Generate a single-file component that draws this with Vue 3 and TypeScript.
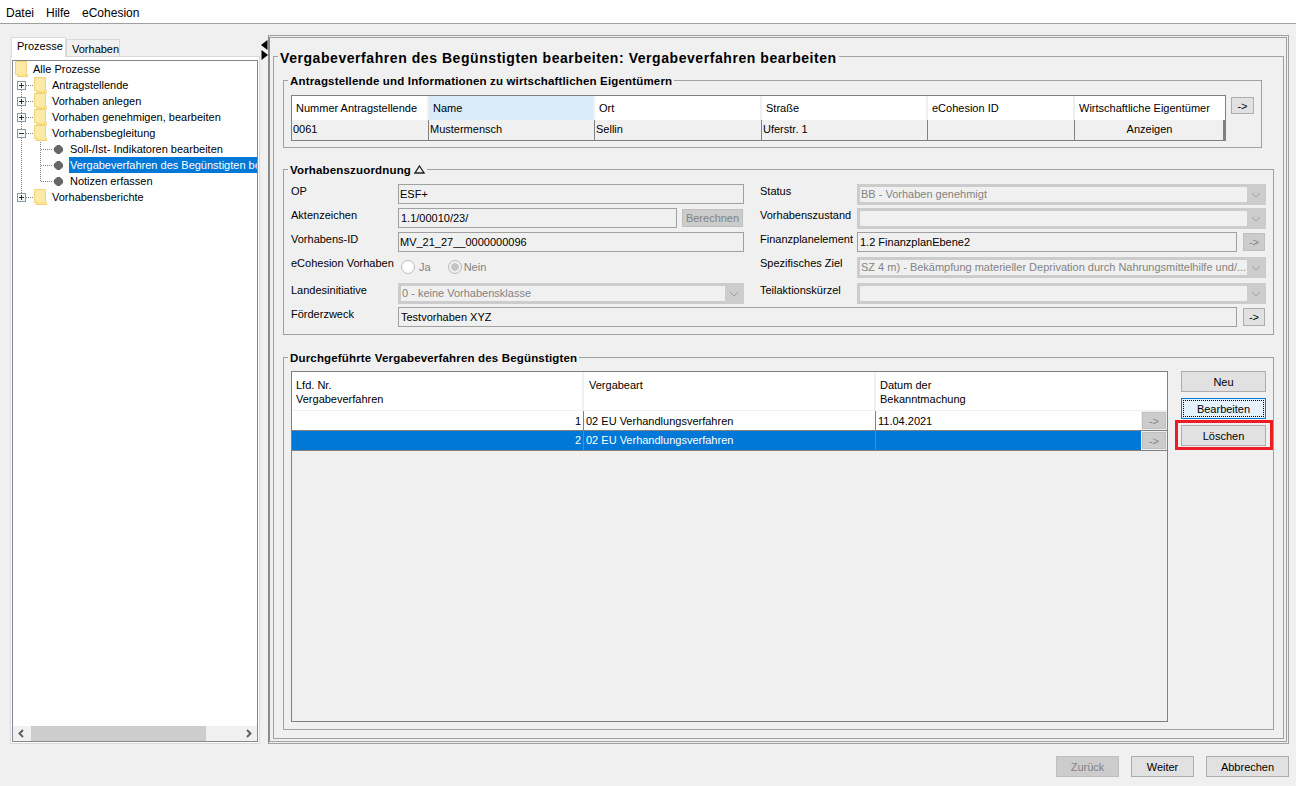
<template>
  <div class="app">
    <nav class="menubar">
      <span v-for="m in menus" :key="m">{{ m }}</span>
    </nav>

    <div class="workspace">
      <aside class="side">
        <div class="tabs">
          <div class="tab active">Prozesse</div>
          <div class="tab">Vorhaben</div>
        </div>
        <div class="tab-body">
          <div class="tree-box">
            <div class="tree">
              <svg class="tree-lines" width="60" height="150" aria-hidden="true">
                <path d="M8.5 29V132M27.500 79V121" stroke="#808080" stroke-dasharray="1 1" fill="none" />
                <path d="M13 24.500H20M13 40.500H20M13 56.500H20M13 72.500H20M13 136.500H20M28 88.500H40M28 104.500H40M28 120.500H40" stroke="#808080" stroke-dasharray="1 1" fill="none" />
              </svg>
              <div
                v-for="node in nodes"
                :key="node.label"
                class="node"
                :class="'level-' + node.level"
              >
                <svg v-if="node.toggle" class="toggle" width="9" height="9" viewBox="0 0 9 9">
                  <rect x=".5" y=".5" width="8" height="8" fill="#f4f6f8" stroke="#8a98a8" />
                  <path :d="node.toggle === '+' ? 'M2 4.500H7M4.500 2V7' : 'M2 4.500H7'" stroke="#333" fill="none" />
                </svg>
                <svg v-if="node.level < 2" class="folder" width="13" height="16" viewBox="0 0 13 16">
                  <path d="M.5 .5H11.500V13.500H12.500V15.500H2.500V13.500H.5Z" fill="#fde48e" stroke="#f2d27a" />
                  <rect x="1" y="1" width="10" height="12" fill="#fdeaa8" />
                </svg>
                <svg v-else class="leaf" width="9" height="9" viewBox="0 0 9 9">
                  <path d="M3 .5H6L8.500 3V6L6 8.500H3L.5 6V3Z" fill="#666" stroke="#666" />
                </svg>
                <span class="node-label" :class="{ selected: node.selected }">{{ node.label }}</span>
              </div>
            </div>
            <div class="hscroll">
              <svg width="18" height="15" viewBox="0 0 18 15"><path d="M10 4L6.500 7.500L10 11" stroke="#606060" stroke-width="2" fill="none" /></svg>
              <div class="hscroll-track"><div class="hscroll-thumb"></div></div>
              <svg width="18" height="15" viewBox="0 0 18 15"><path d="M8 4L11.500 7.500L8 11" stroke="#606060" stroke-width="2" fill="none" /></svg>
            </div>
          </div>
        </div>
      </aside>

      <div class="splitter">
        <svg width="7" height="20" viewBox="0 0 7 20">
          <path d="M6.500 0V10L0 5Z" fill="#000" />
          <path d="M.5 10V20L7 15Z" fill="#000" />
        </svg>
      </div>

      <main class="main-frame">
        <fieldset class="title-set">
          <legend><span>Vergabeverfahren des Begünstigten bearbeiten: Vergabeverfahren bearbeiten</span></legend>

          <div class="owner-row">
            <fieldset class="group owner-set">
              <legend><span>Antragstellende und Informationen zu wirtschaftlichen Eigentümern</span></legend>
              <div class="owner-table">
                <div
                  v-for="(h, i) in ownerHead"
                  :key="h"
                  class="th"
                  :class="{ sorted: i === 1 }"
                >{{ h }}</div>
                <div v-for="(c, i) in ownerRow" :key="i" class="td" :class="{ center: i === 5 }">{{ c }}</div>
              </div>
            </fieldset>
            <button class="btn arrow owner-arrow">-&gt;</button>
          </div>

          <fieldset class="group assign-set">
            <legend><span>Vorhabenszuordnung <svg class="delta" width="11" height="9" viewBox="0 0 11 9"><path d="M5.500 1L10 8H1Z" fill="none" stroke="#222" stroke-width="1.300" /></svg></span></legend>
            <div class="form">
              <div class="form-col left">
                <div class="f-row"><label>OP</label><div class="field grow">ESF+</div></div>
                <div class="f-row">
                  <label>Aktenzeichen</label>
                  <div class="field aktz">1.1/00010/23/</div>
                  <button class="btn disabled calc" disabled>Berechnen</button>
                </div>
                <div class="f-row"><label>Vorhabens-ID</label><div class="field grow">MV_21_27__0000000096</div></div>
                <div class="f-row tall">
                  <label>eCohesion Vorhaben</label>
                  <div class="radios">
                    <span class="radio"><i></i>Ja</span>
                    <span class="radio on"><i></i>Nein</span>
                  </div>
                </div>
                <div class="f-row">
                  <label>Landesinitiative</label>
                  <div class="combo grow"><span>0 - keine Vorhabensklasse</span><svg width="10" height="6" viewBox="0 0 10 6"><path d="M1 1L5 5L9 1" fill="none" stroke="#a0a0a0" /></svg></div>
                </div>
              </div>
              <div class="form-col right">
                <div class="f-row">
                  <label>Status</label>
                  <div class="combo grow"><span>BB - Vorhaben genehmigt</span><svg width="10" height="6" viewBox="0 0 10 6"><path d="M1 1L5 5L9 1" fill="none" stroke="#a0a0a0" /></svg></div>
                </div>
                <div class="f-row">
                  <label>Vorhabenszustand</label>
                  <div class="combo grow"><span></span><svg width="10" height="6" viewBox="0 0 10 6"><path d="M1 1L5 5L9 1" fill="none" stroke="#a0a0a0" /></svg></div>
                </div>
                <div class="f-row">
                  <label>Finanzplanelement</label>
                  <div class="field grow fin">1.2 FinanzplanEbene2</div>
                  <button class="btn arrow disabled row-arrow" disabled>-&gt;</button>
                </div>
                <div class="f-row tall">
                  <label>Spezifisches Ziel</label>
                  <div class="combo grow nudge"><span>SZ 4 m) - Bekämpfung materieller Deprivation durch Nahrungsmittelhilfe und/...</span><svg width="10" height="6" viewBox="0 0 10 6"><path d="M1 1L5 5L9 1" fill="none" stroke="#a0a0a0" /></svg></div>
                </div>
                <div class="f-row">
                  <label>Teilaktionskürzel</label>
                  <div class="combo grow"><span></span><svg width="10" height="6" viewBox="0 0 10 6"><path d="M1 1L5 5L9 1" fill="none" stroke="#a0a0a0" /></svg></div>
                </div>
              </div>
              <div class="f-row wide">
                <label>Förderzweck</label>
                <div class="field grow">Testvorhaben XYZ</div>
                <button class="btn arrow row-arrow">-&gt;</button>
              </div>
            </div>
          </fieldset>

          <fieldset class="group proc-set">
            <legend><span>Durchgeführte Vergabeverfahren des Begünstigten</span></legend>
            <div class="proc-body">
              <div class="proc-table">
                <div class="proc-head">
                  <div>Lfd. Nr.<br />Vergabeverfahren</div>
                  <div>Vergabeart</div>
                  <div>Datum der<br />Bekanntmachung</div>
                </div>
                <div
                  v-for="row in procRows"
                  :key="row.nr"
                  class="proc-row"
                  :class="{ selected: row.selected }"
                >
                  <div class="num">{{ row.nr }}</div>
                  <div>{{ row.art }}</div>
                  <div class="date"><span>{{ row.date }}</span><button class="btn arrow disabled cell-arrow" disabled>-&gt;</button></div>
                </div>
              </div>
              <div class="proc-actions">
                <button class="btn act">Neu</button>
                <button class="btn act focus"><span>Bearbeiten</span></button>
                <div class="marker"><button class="btn act">Löschen</button></div>
              </div>
            </div>
          </fieldset>
        </fieldset>
      </main>
    </div>

    <footer class="footer">
      <button class="btn disabled foot" disabled>Zurück</button>
      <button class="btn foot">Weiter</button>
      <button class="btn foot wide-btn">Abbrechen</button>
    </footer>
  </div>
</template>

<script setup lang="ts">
interface TreeNode {
  label: string;
  level: number;
  toggle?: '+' | '-';
  selected?: boolean;
}

const menus = ['Datei', 'Hilfe', 'eCohesion'];

const nodes: TreeNode[] = [
  { label: 'Alle Prozesse', level: 0 },
  { label: 'Antragstellende', level: 1, toggle: '+' },
  { label: 'Vorhaben anlegen', level: 1, toggle: '+' },
  { label: 'Vorhaben genehmigen, bearbeiten', level: 1, toggle: '+' },
  { label: 'Vorhabensbegleitung', level: 1, toggle: '-' },
  { label: 'Soll-/Ist- Indikatoren bearbeiten', level: 2 },
  { label: 'Vergabeverfahren des Begünstigten bearbeiten', level: 2, selected: true },
  { label: 'Notizen erfassen', level: 2 },
  { label: 'Vorhabensberichte', level: 1, toggle: '+' }
];

const ownerHead = ['Nummer Antragstellende', 'Name', 'Ort', 'Straße', 'eCohesion ID', 'Wirtschaftliche Eigentümer'];
const ownerRow = ['0061', 'Mustermensch', 'Sellin', 'Uferstr. 1', '', 'Anzeigen'];

const procRows = [
  { nr: 1, art: '02 EU Verhandlungsverfahren', date: '11.04.2021', selected: false },
  { nr: 2, art: '02 EU Verhandlungsverfahren', date: '', selected: true }
];
</script>

<style>
html, body { margin: 0; background: #f0f0f0; }
</style>

<style scoped>
.app {
  width: 1296px;
  height: 786px;
  overflow: hidden;
  background: #f0f0f0;
  color: #000;
  font: 11px/14px "Liberation Sans", sans-serif;
}

button {
  font: inherit;
  color: inherit;
  padding: 0;
}

/* menu */
.menubar {
  height: 23px;
  box-sizing: border-box;
  display: flex;
  gap: 12px;
  padding: 6px 0 0 6px;
  background: #fff;
  font-size: 12px;
}

.workspace {
  height: 721px;
  display: flex;
  border-top: 1px solid #a0a0a0;
  box-sizing: border-box;
}

/* left side */
.side {
  width: 250px;
  margin: 13px 0 0 10px;
  display: flex;
  flex-direction: column;
}

.tabs {
  display: flex;
  align-items: flex-end;
  height: 20px;
  padding-left: 1px;
}

.tab {
  height: 18px;
  box-sizing: border-box;
  padding: 2px 1px 0 5px;
  width: 54px;
  background: #f0f0f0;
  border: 1px solid #d9d9d9;
  border-bottom: 0;
}

.tab.active {
  height: 20px;
  width: 55px;
  padding: 1px 0 0 5px;
  background: #fff;
  border-color: #d9d9d9;
  position: relative;
  z-index: 1;
}

.tab-body {
  flex: 1;
  box-sizing: border-box;
  height: 687px;
  border: 1px solid #d9d9d9;
  padding: 3px 1px 1px;
  background: #fff;
  margin-top: -1px;
}

.tree-box {
  height: 100%;
  box-sizing: border-box;
  border: 1px solid #828790;
  display: flex;
  flex-direction: column;
  background: #fff;
}

.tree {
  flex: 1;
  position: relative;
  overflow: hidden;
}

.tree-lines {
  position: absolute;
  left: 0;
  top: 0;
}

.node {
  position: relative;
  height: 16px;
  display: flex;
  align-items: center;
  white-space: nowrap;
}

.level-0 { padding-left: 2px; }
.level-1 { padding-left: 4px; }
.level-2 { padding-left: 41px; }

.toggle { flex: none; margin-right: 8px; }
.folder { flex: none; margin-right: 4px; }
.leaf { flex: none; margin-right: 6px; }

.node-label { flex: none; line-height: 16px; padding: 0 1px; }
.node-label.selected { background: #0078d7; color: #fff; }

.hscroll {
  height: 15px;
  display: flex;
  background: #f0f0f0;
}

.hscroll-track { flex: 1; }
.hscroll-thumb { width: 175px; height: 100%; background: #cdcdcd; }

/* splitter */
.splitter {
  width: 8px;
  padding: 16px 0 0 1px;
  box-sizing: border-box;
}
.splitter svg { display: block; }

/* main */
.main-frame {
  width: 1021px;
  height: 709px;
  margin-top: 11px;
  box-sizing: border-box;
  border: 3px double #a0a0a0;
  border-left: 2px solid #8a8a8a;
  padding: 9px 2px 2px 3px;
}

fieldset {
  margin: 0;
  min-width: 0;
  box-sizing: border-box;
  border: 1px solid #a0a0a0;
}

legend {
  padding: 0 2px;
  white-space: nowrap;
}

/* legend text sits a little below the frame line */
legend span {
  display: block;
  position: relative;
  top: 1px;
}

.title-set {
  height: 100%;
  padding: 0 9px;
}

.title-set > legend {
  margin-left: -5px;
  font: 700 14px/18px "Liberation Sans", sans-serif;
  letter-spacing: .56px;
}

.title-set > legend span { top: 2px; }

.group > legend {
  margin-left: -3px;
  font: 700 11.500px/14px "Liberation Sans", sans-serif;
  letter-spacing: .17px;
}

.owner-row {
  display: flex;
  align-items: flex-start;
  margin-top: 8px;
}

.owner-set {
  width: 979px;
  height: 75px;
  padding: 8px 7px 0;
}

.owner-table {
  display: grid;
  grid-template-columns: 137px 166px 167px 166px 147px 150px;
  grid-template-rows: 24px 20px;
  width: 935px;
  box-sizing: border-box;
  border: 1px solid #808080;
  background: #f0f0f0;
}

.th {
  background: #fff;
  padding: 5px 0 0 4px;
  border-right: 2px solid #f0f0f0;
  white-space: nowrap;
}
.th:nth-child(6) { border-right: 0; }
.th.sorted { background: #d9ebf9; }

.td {
  padding: 2px 0 0 1px;
  border-right: 1px solid #808080;
}
.td:nth-child(12) { border-right: 2px solid #808080; }
.td.center { text-align: center; }

.btn {
  box-sizing: border-box;
  border: 1px solid #adadad;
  background: #e1e1e1;
  text-align: center;
  display: block;
}

.btn.disabled {
  background: #cccccc;
  border-color: #bfbfbf;
  color: #838383;
}

.arrow { line-height: 12px; }

.owner-arrow {
  width: 23px;
  height: 17px;
  margin: 24px 0 0 -31px;
  position: relative;
}

.assign-set {
  height: 173px;
  margin-top: 14px;
  padding: 8px 7px 0;
}

.form {
  display: grid;
  grid-template-columns: 453px 506px;
  column-gap: 16px;
}

.form-col {
  display: flex;
  flex-direction: column;
  gap: 4px;
}

.f-row {
  display: flex;
  align-items: flex-start;
  height: 20px;
}

.f-row.tall { height: 23px; }

.f-row label {
  flex: none;
  line-height: 14px;
}

.left label, .wide label { width: 107px; }
.right label { width: 97px; }

.grow { flex: 1; min-width: 0; }

.field {
  height: 20px;
  box-sizing: border-box;
  border: 1px solid #a0a0a0;
  padding: 2px 0 0 1px;
  background: #f0f0f0;
  white-space: nowrap;
}

.left .field.grow { flex: none; width: 346px; }
.right .fin { flex: none; width: 380px; padding-left: 2px; }

.aktz { width: 279px; padding-left: 2px; flex: none; }

.calc {
  width: 61px;
  height: 18px;
  margin: 1px 0 0 5px;
}

.radios {
  display: flex;
  gap: 17px;
  padding: 4px 0 0 3px;
  color: #838383;
}

.radio { display: flex; align-items: center; gap: 4px; }
.radio.on { gap: 2px; }

.radio i {
  width: 14px;
  height: 14px;
  box-sizing: border-box;
  border: 1px solid #bcbcbc;
  border-radius: 50%;
  background: #fff;
  display: block;
}

.radio.on i {
  background: radial-gradient(circle, #c4c4c4 0 3.500px, #efefef 4px);
}

.combo {
  height: 21px;
  box-sizing: border-box;
  background: #cccccc;
  padding: 3px;
  display: flex;
  align-items: center;
  color: #838383;
}

.combo.nudge { margin-top: 1px; }

.combo span {
  flex: 1;
  height: 15px;
  background: #f0f0f0;
  padding-left: 1px;
  line-height: 14px;
  white-space: nowrap;
  overflow: hidden;
  margin-right: 4px;
}

.combo svg { flex: none; margin-right: 2px; }

.left .combo.grow { flex: none; width: 346px; }

.row-arrow {
  width: 22px;
  height: 18px;
  margin: 1px 1px 0 6px;
  flex: none;
}

.wide {
  grid-column: 1 / 3;
  margin-top: 4px;
}

.wide .field { flex: none; width: 839px; padding-left: 2px; }

.proc-set {
  height: 380px;
  margin-top: 15px;
  padding: 7px 7px 0;
}

.proc-body {
  display: flex;
  align-items: flex-start;
}

.proc-table {
  width: 877px;
  height: 351px;
  box-sizing: border-box;
  border: 1px solid #808080;
  background: #f0f0f0;
}

.proc-head,
.proc-row {
  display: grid;
  grid-template-columns: 292px 292px 1fr;
}

.proc-head {
  height: 38px;
  background: #fff;
}

.proc-head > div {
  padding: 6px 0 0 4px;
  border-right: 2px solid #f0f0f0;
}

.proc-head > div:nth-child(2) { padding-left: 5px; }
.proc-head > div:last-child { border-right: 0; }

.proc-row {
  height: 20px;
  background: #fff;
  border-top: 1px solid #f0f0f0;
  box-sizing: border-box;
}

.proc-row.selected {
  background: #0078d7;
  color: #fff;
  border-top-color: #808080;
  border-bottom: 1px solid #808080;
  height: 21px;
}

.proc-row > div {
  border-right: 1px solid #808080;
  padding: 3px 0 0 2px;
  white-space: nowrap;
}

.proc-row.selected > div { padding-top: 2px; }

.proc-row > .num {
  text-align: right;
  padding-right: 2px;
}

.proc-row > .date,
.proc-row.selected > .date {
  display: flex;
  justify-content: space-between;
  padding: 0 1px 0 2px;
  border-right: 0;
}

.date span { padding-top: 3px; }

.cell-arrow {
  width: 24px;
  height: 17px;
  margin-top: 1px;
  flex: none;
  box-shadow: 0 0 0 1px #f0f0f0;
}

.proc-actions {
  display: flex;
  flex-direction: column;
  gap: 6px;
  margin-left: 13px;
  width: 85px;
  flex: none;
}

.act {
  width: 85px;
  height: 21px;
}

.act.focus {
  border-color: #0078d7;
  padding: 1px;
  background: #e5f1fb;
}

.act.focus span {
  display: block;
  height: 17px;
  border: 1px dotted #000;
  box-sizing: border-box;
  line-height: 16px;
}

.marker {
  margin: -5px -7px -4px -6px;
  border: 3px solid #ed1c24;
  padding: 2px 4px 1px 3px;
}

/* bottom buttons */
.footer {
  display: flex;
  justify-content: flex-end;
  gap: 12px;
  padding: 12px 7px 0 0;
}

.foot {
  width: 63px;
  height: 21px;
}

.wide-btn { width: 83px; }
</style>
